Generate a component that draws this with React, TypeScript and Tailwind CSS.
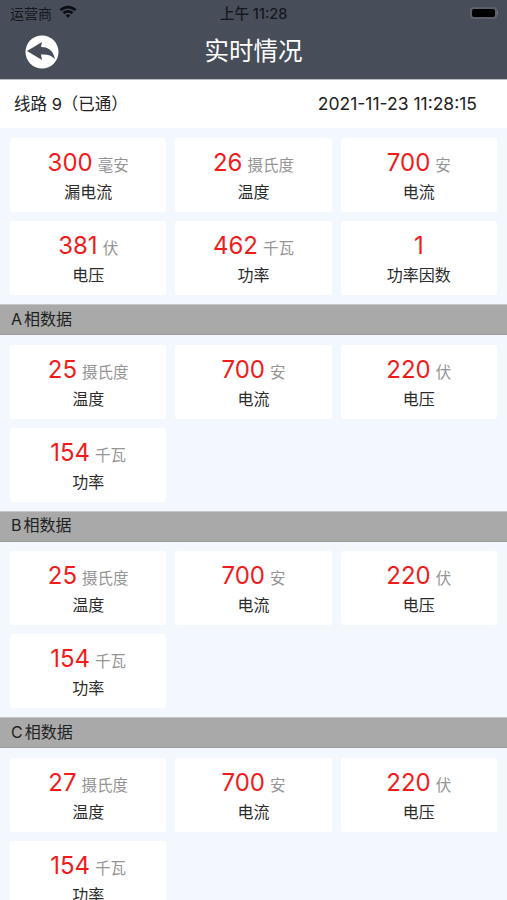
const FONT = "font-['Inter','Noto_Sans_CJK_SC',sans-serif]";

interface Metric {
    value: string;
    unit: string;
    label: string;
}

const totals: Metric[] = [
    { value: "300", unit: "毫安", label: "漏电流" },
    { value: "26", unit: "摄氏度", label: "温度" },
    { value: "700", unit: "安", label: "电流" },
    { value: "381", unit: "伏", label: "电压" },
    { value: "462", unit: "千瓦", label: "功率" },
    { value: "1", unit: "", label: "功率因数" },
];

function phase(temp: string): Metric[] {
    return [
        { value: temp, unit: "摄氏度", label: "温度" },
        { value: "700", unit: "安", label: "电流" },
        { value: "220", unit: "伏", label: "电压" },
        { value: "154", unit: "千瓦", label: "功率" },
    ];
}

const sections = [
    { title: "A相数据", items: phase("25") },
    { title: "B相数据", items: phase("25") },
    { title: "C相数据", items: phase("27") },
];

function MetricGrid({ items, spacing }: { items: Metric[]; spacing: string }) {
    return (
        <div className={`grid grid-cols-3 gap-[9px] px-[10px] ${spacing}`}>
            {items.map((m, idx) => (
                <div key={idx} className="h-[74px] bg-white rounded-[3px] flex flex-col items-center pt-[8px]">
                    <div className="flex items-baseline justify-center h-[33px]">
                        <span className="text-[24px] leading-[33px] text-[#f01c1c]">{m.value}</span>
                        {m.unit && <span className="text-[15.5px] text-[#959595] ml-[5px]">{m.unit}</span>}
                    </div>
                    <div className="text-[16px] leading-[22px] text-[#2b2b2b] mt-[2px]">{m.label}</div>
                </div>
            ))}
        </div>
    );
}

export default function App() {
    return (
        <div className={`${FONT} w-[507px] h-[900px] overflow-hidden bg-[#f3f8fe]`}>
            <div className="h-[80px] bg-[#474e59] border-b border-[#b9bdc2]">
                <div className="h-[26px] px-[10px] flex items-center justify-between relative text-[#15181d]">
                    <div className="flex items-center gap-[7px]">
                        <span className="text-[14px]">运营商</span>
                        <svg width="18" height="13" viewBox="0 0 18 13" className="mb-[3px]">
                            <path d="M0.5 4.2 A12 12 0 0 1 17.5 4.2 L15.6 6.1 A9.4 9.4 0 0 0 2.4 6.1 Z" fill="#0c0e12" />
                            <path d="M3.6 7.3 A7.6 7.6 0 0 1 14.4 7.3 L12.5 9.2 A5 5 0 0 0 5.5 9.2 Z" fill="#0c0e12" />
                            <path d="M6.7 10.4 A3.2 3.2 0 0 1 11.3 10.4 L9 12.8 Z" fill="#0c0e12" />
                        </svg>
                    </div>
                    <span className="absolute left-[220px] top-[3px] text-[14.5px] font-medium">上午 11:28</span>
                    <div className="flex items-center mr-[-1px]">
                        <div className="w-[27px] h-[12px] rounded-[3px] bg-[#5b616b] flex items-center justify-center">
                            <div className="w-[23px] h-[8px] rounded-[2px] bg-black" />
                        </div>
                        <div className="w-[1px] h-[4px] bg-[#6b7079]" />
                    </div>
                </div>
                <div className="h-[53px] relative flex items-center justify-center">
                    <button className="absolute left-[25px] top-[9px] w-[34px] h-[34px]">
                        <svg width="34" height="34" viewBox="0 0 34 34">
                            <circle cx="17" cy="17" r="16.5" fill="#fff" />
                            <path d="M2 16 L17 7 L16 12 C23 12 28 15 30 24 C26 20 22 19 16 19.5 L17 25 Z" fill="#474e59" />
                        </svg>
                    </button>
                    <span className="text-[24.5px] text-white mt-[-3px]">实时情况</span>
                </div>
            </div>

            <div className="h-[48px] bg-white flex items-center justify-between pl-[14px] pr-[30px] text-[#222]">
                <span className="text-[16.5px]">线路 9（已通）</span>
                <span className="text-[17.5px]">2021-11-23 11:28:15</span>
            </div>

            <MetricGrid items={totals} spacing="pt-[10px] pb-[9px]" />

            {sections.map((s) => (
                <div key={s.title}>
                    <div className="h-[31px] bg-[#a9a9a9] border-t border-b border-t-[#c6c6c6] border-b-[#9c9c9c] flex items-center pl-[11px] pb-[2px] text-[16px] text-[#222]">
                        {s.title.charAt(0)}
                        <span className="ml-[2px]">{s.title.slice(1)}</span>
                    </div>
                    <MetricGrid items={s.items} spacing="pt-[9.5px] pb-[9px]" />
                </div>
            ))}
        </div>
    );
}
